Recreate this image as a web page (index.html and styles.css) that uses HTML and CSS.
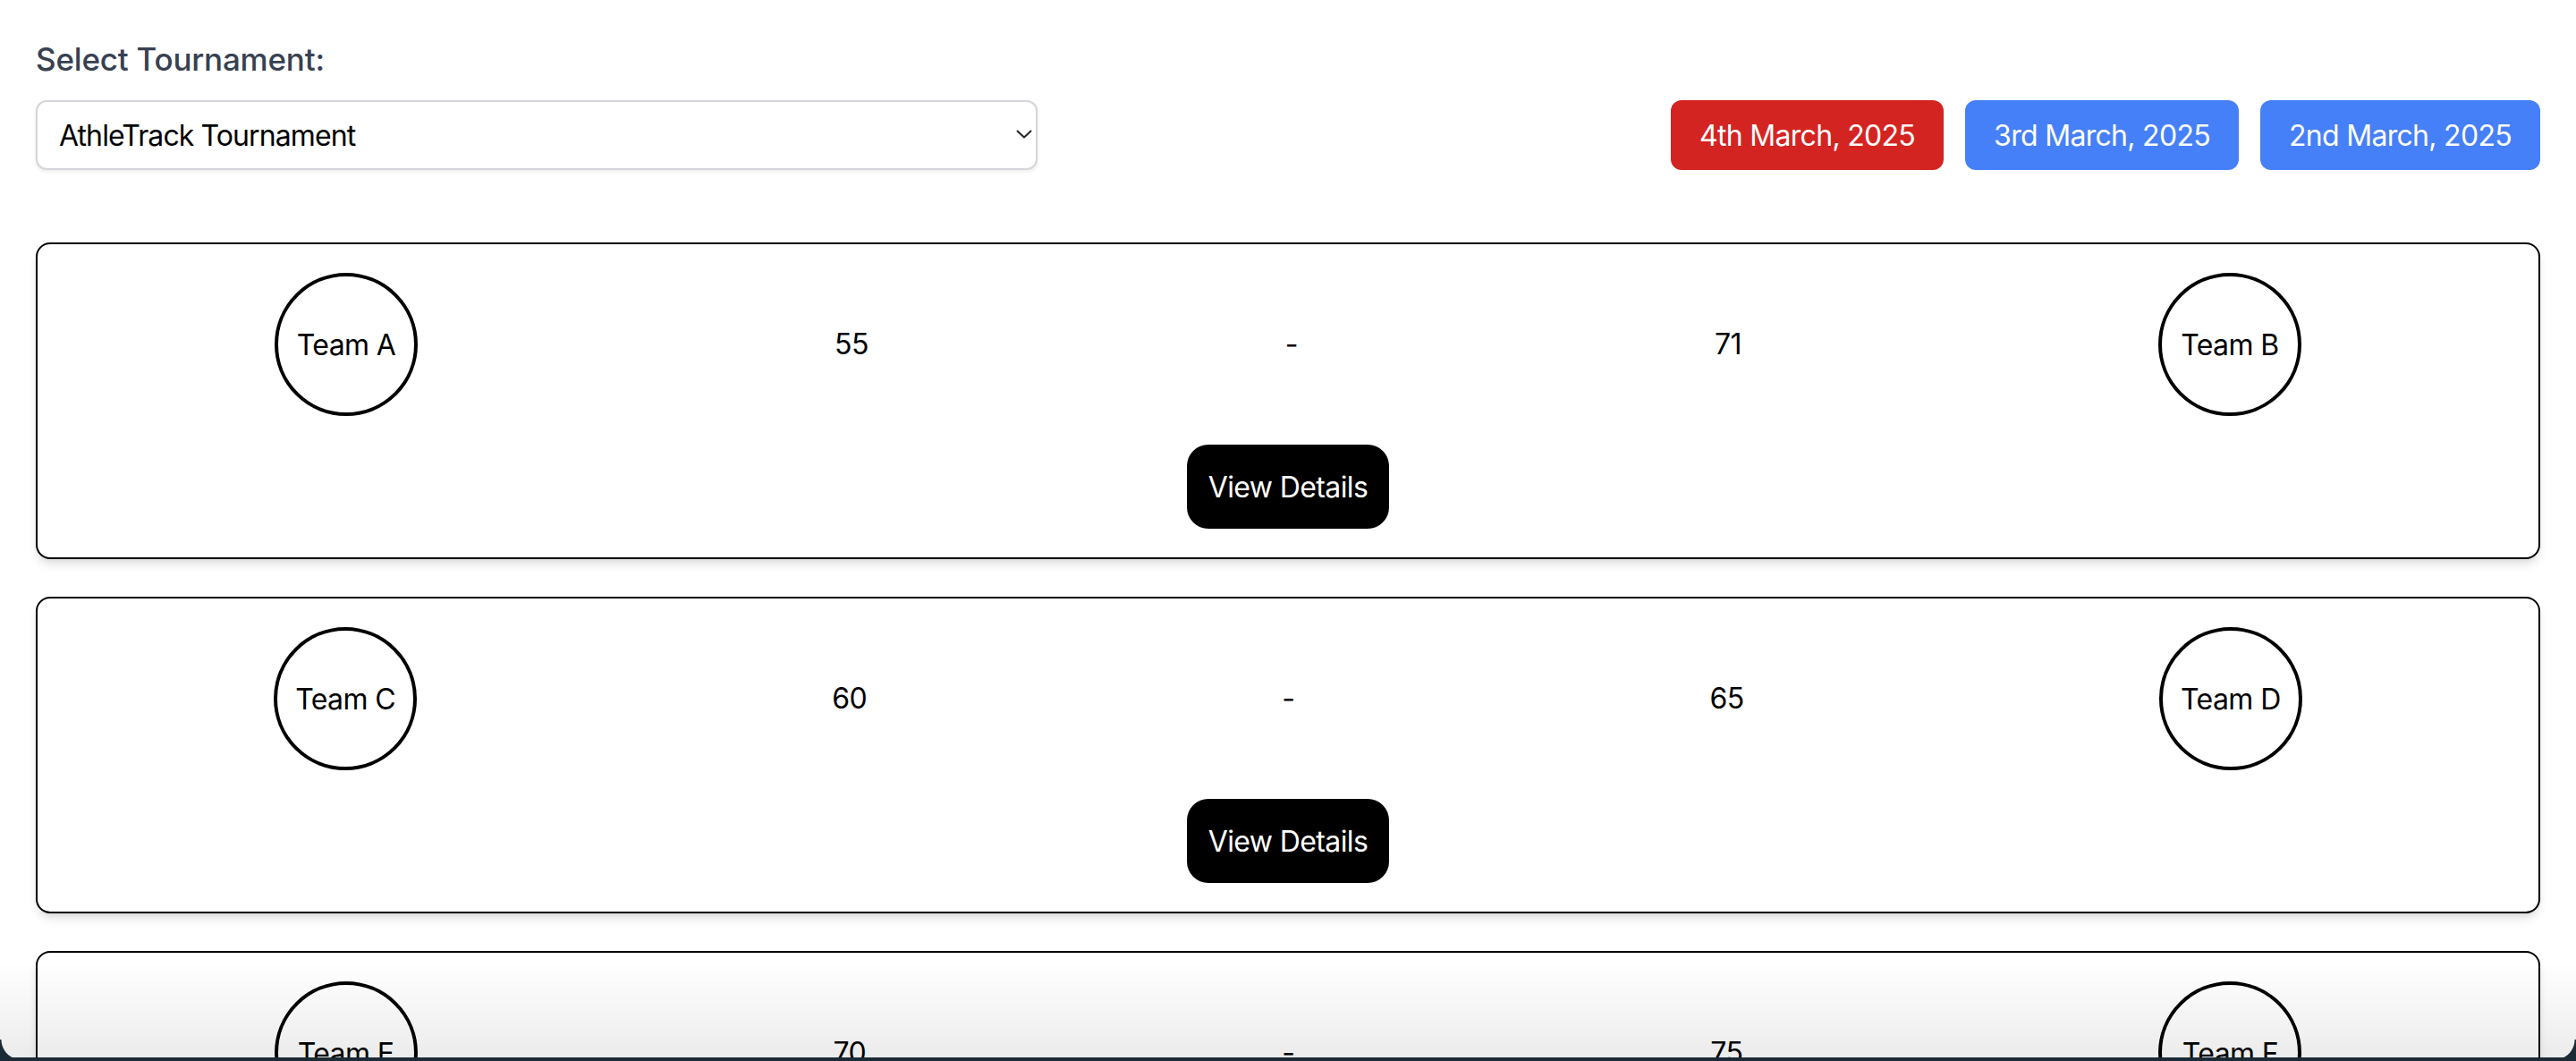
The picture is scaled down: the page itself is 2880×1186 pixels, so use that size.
FILE: index.html
```html
<!DOCTYPE html>
<html lang="en">
<head>
<meta charset="utf-8">
<title>AthleTrack</title>
<link rel="stylesheet" href="styles.css">
</head>
<body>
<main class="page">
  <header class="toolbar">
    <div class="picker">
      <label class="picker-label" for="tournament">Select Tournament:</label>
      <div class="select-wrap">
        <select id="tournament" class="select">
          <option>AthleTrack Tournament</option>
        </select>
        <svg class="chevron" width="18" height="10" viewBox="0 0 18 10" aria-hidden="true"><path d="M1.5 1.5 L9 8.5 L16.5 1.5" fill="none" stroke="#222" stroke-width="2" stroke-linecap="round" stroke-linejoin="round"/></svg>
      </div>
    </div>
    <nav class="dates">
      <button class="date date-active">4th March, 2025</button>
      <button class="date">3rd March, 2025</button>
      <button class="date">2nd March, 2025</button>
    </nav>
  </header>

  <section class="matches">
    <article class="match">
      <div class="match-row">
        <div class="team">Team A</div>
        <div class="score">55</div>
        <div class="sep">-</div>
        <div class="score">71</div>
        <div class="team">Team B</div>
      </div>
      <button class="details">View Details</button>
    </article>
    <article class="match">
      <div class="match-row">
        <div class="team">Team C</div>
        <div class="score">60</div>
        <div class="sep">-</div>
        <div class="score">65</div>
        <div class="team">Team D</div>
      </div>
      <button class="details">View Details</button>
    </article>
    <article class="match">
      <div class="match-row">
        <div class="team">Team E</div>
        <div class="score">70</div>
        <div class="sep">-</div>
        <div class="score">75</div>
        <div class="team">Team F</div>
      </div>
      <button class="details">View Details</button>
    </article>
  </section>
</main>
<div class="window-shade" aria-hidden="true"></div>
<div class="window-edge" aria-hidden="true"></div>
<div class="window-corner corner-left" aria-hidden="true"></div>
<div class="window-corner corner-right" aria-hidden="true"></div>
</body>
</html>
```
FILE: styles.css
```css
* { box-sizing: border-box; }

html, body {
  margin: 0;
  background: #ffffff;
  font-family: Inter, "Noto Sans", "Liberation Sans", sans-serif;
  letter-spacing: -0.6px;
  color: #000;
}

.page {
  padding: 42px 40px 40px;
}

.toolbar {
  display: flex;
  justify-content: space-between;
  align-items: flex-end;
  margin-bottom: 81px;
}

.picker {
  display: flex;
  flex-direction: column;
}

.picker-label {
  font-size: 35px;
  line-height: 48px;
  font-weight: 500;
  letter-spacing: -0.2px;
  color: #374151;
  margin-bottom: 22px;
}

.select-wrap {
  position: relative;
  width: 1120px;
}

.select {
  -webkit-appearance: none;
  appearance: none;
  width: 100%;
  height: 78px;
  padding: 0 40px 0 24px;
  font-family: inherit;
  font-size: 32px;
  letter-spacing: -0.9px;
  color: #000;
  background: #fff;
  border: 2px solid #d4d6dc;
  border-radius: 12px;
  box-shadow: 0 2px 4px rgba(0, 0, 0, 0.08);
}

.chevron {
  position: absolute;
  right: 6px;
  top: 33px;
  pointer-events: none;
}

.dates {
  display: flex;
  gap: 24px;
}

.date {
  height: 78px;
  padding: 0 32px;
  border: none;
  border-radius: 12px;
  background: #4680f8;
  color: #fff;
  font-family: inherit;
  font-size: 32px;
  letter-spacing: -0.7px;
}

.date-active {
  background: #d42422;
}

.matches {
  display: flex;
  flex-direction: column;
  gap: 42px;
}

.match {
  border: 2px solid #000;
  border-radius: 16px;
  padding: 32px;
  background: #fff;
  box-shadow: 0 8px 12px -2px rgba(0, 0, 0, 0.1), 0 4px 8px -4px rgba(0, 0, 0, 0.1);
  display: flex;
  flex-direction: column;
  align-items: center;
}

.match-row {
  width: 100%;
  display: flex;
  justify-content: space-around;
  align-items: center;
}

.team {
  width: 160px;
  height: 160px;
  border: 4px solid #000;
  border-radius: 50%;
  display: flex;
  align-items: center;
  justify-content: center;
  font-size: 32px;
}

.score, .sep {
  font-size: 32px;
  line-height: 48px;
}

.details {
  margin-top: 32px;
  padding: 0 24px;
  height: 94px;
  border: none;
  border-radius: 24px;
  background: #000;
  color: #fff;
  font-family: inherit;
  font-size: 32px;
  letter-spacing: -0.6px;
}

.window-shade {
  position: fixed;
  left: 0;
  right: 0;
  bottom: 0;
  height: 110px;
  background: linear-gradient(to bottom, rgba(0, 0, 0, 0), rgba(0, 0, 0, 0.08));
  pointer-events: none;
}

.window-edge {
  position: fixed;
  left: 0;
  right: 0;
  bottom: 0;
  height: 4px;
  background: #1b2b35;
}

.window-corner {
  position: fixed;
  bottom: 0;
  width: 24px;
  height: 24px;
  background: radial-gradient(circle at var(--cx) 0, transparent 22px, #1b2b35 23px);
}

.corner-left {
  left: 0;
  --cx: 100%;
}

.corner-right {
  right: 0;
  --cx: 0;
}
```
